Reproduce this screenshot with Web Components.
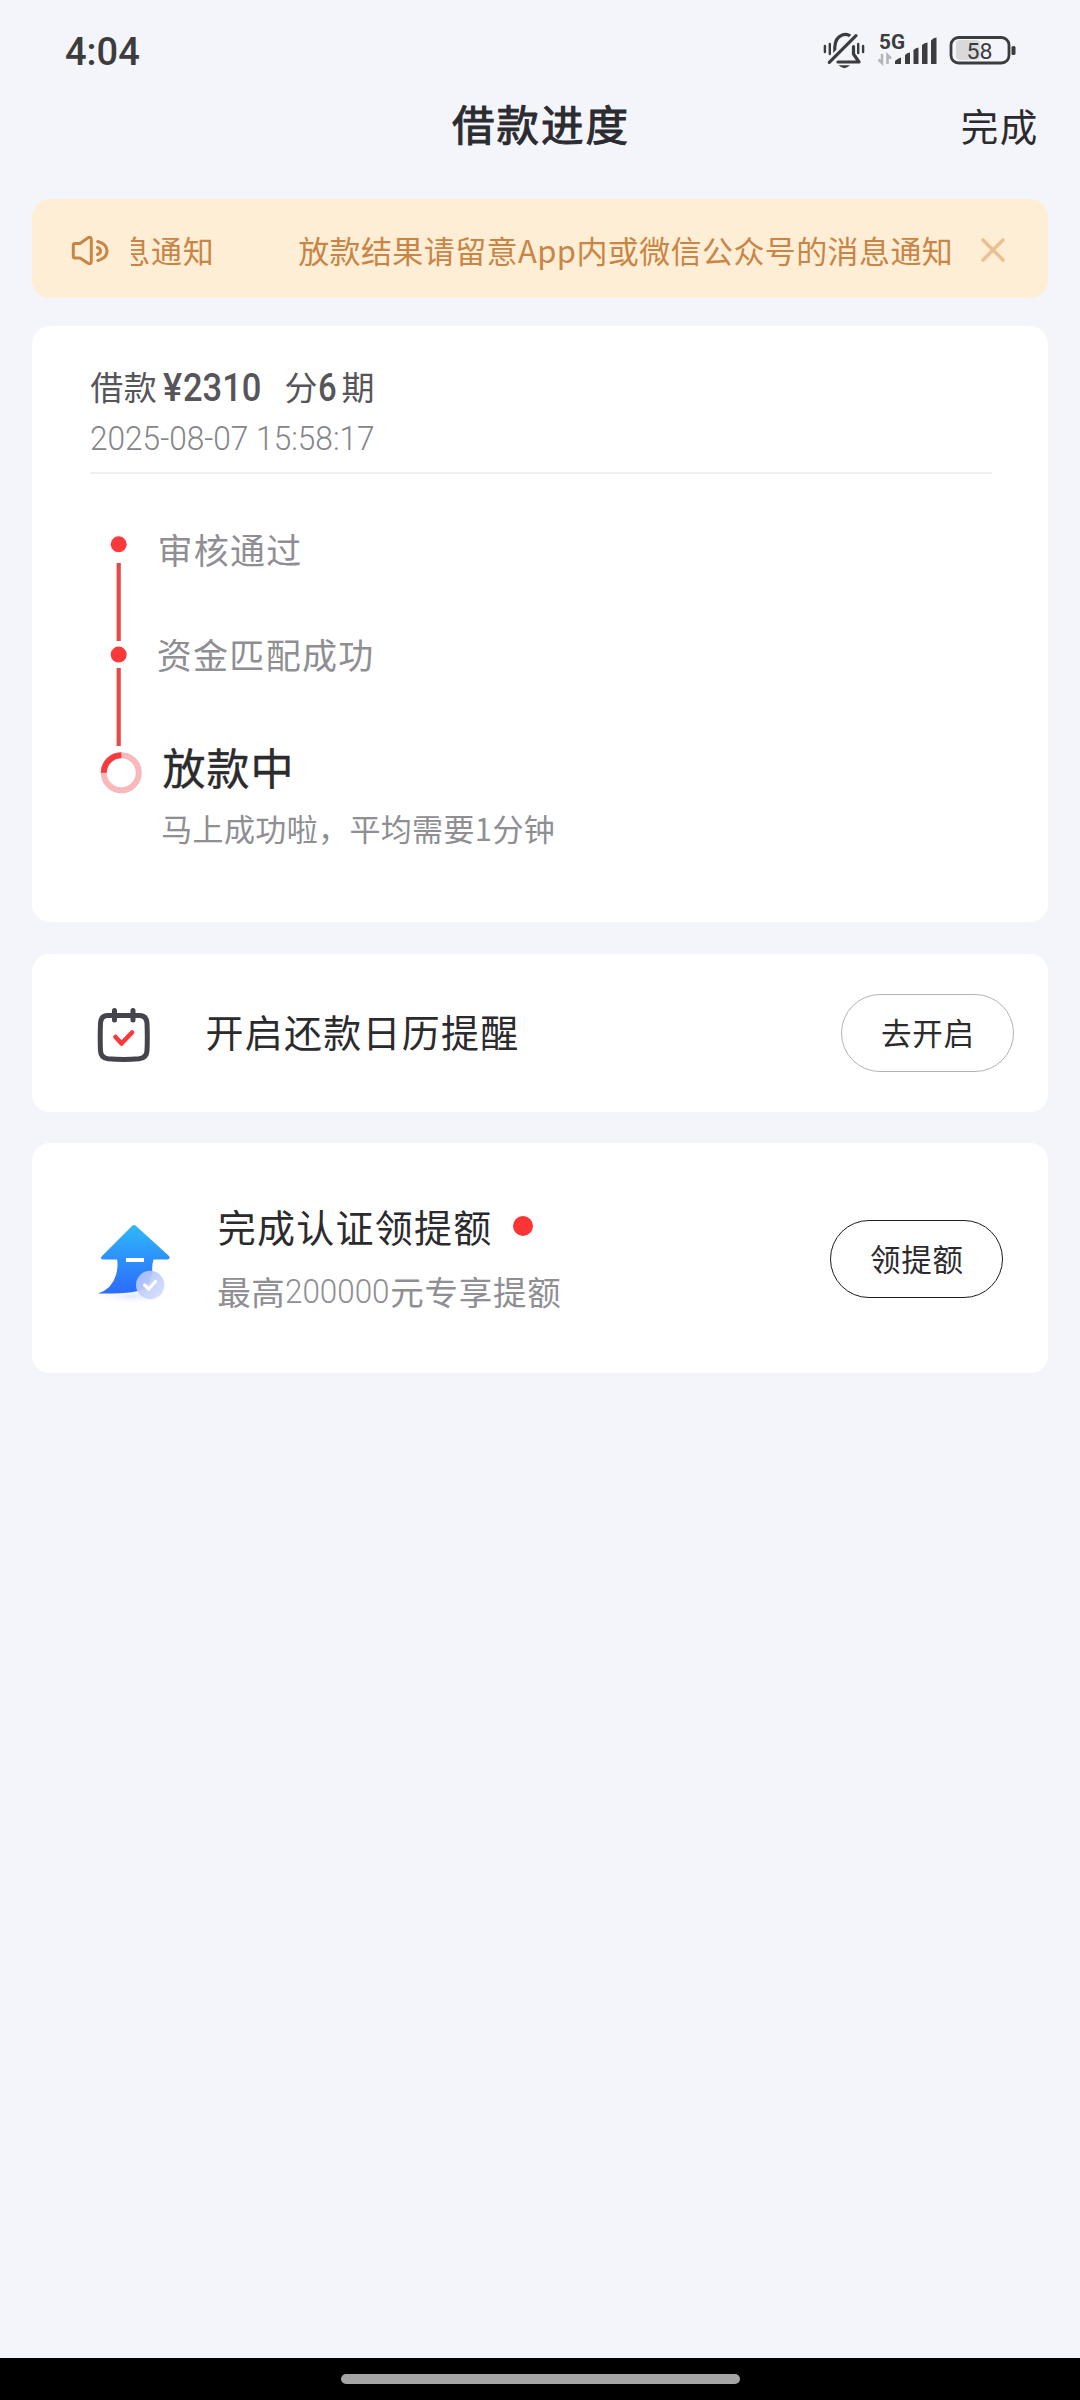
<!DOCTYPE html>
<html lang="zh-CN">
<head>
<meta charset="utf-8">
<title>借款进度</title>
<style>
html,body{margin:0;padding:0;background:#f4f5fb}
body{width:1080px;height:2400px;overflow:hidden;font-family:"Noto Sans CJK SC",sans-serif;color:#2b2b2e}
</style>
</head>
<body>
<loan-progress-page></loan-progress-page>
<script>
const define=(name,html,setup)=>customElements.define(name,class extends HTMLElement{
  constructor(){super();this.attachShadow({mode:'open'}).innerHTML=html;}
  connectedCallback(){if(setup)setup(this,this.shadowRoot);}
});

/* One line of text, spread to the width given in w: tracking for Chinese text, glyph scaling for figures. */
define('fit-text',`<style>
:host{display:block;flex:none;white-space:nowrap;line-height:1}
span{display:inline-block;transform-origin:0 50%;white-space:pre}
</style><span><slot></slot></span>`,(host,root)=>{
  const s=root.querySelector('span'),w=+host.getAttribute('w');
  if(!w)return;
  host.style.width=w+'px';
  const text=host.textContent||(host.getRootNode().host||host).textContent;
  if(/[\u4e00-\u9fff]/.test(text)){
    const track=(w-s.getBoundingClientRect().width)/[...text.trim()].length;
    s.style.letterSpacing=track+'px';
    s.style.marginLeft=track/2+'px';
    s.style.marginRight=-track/2+'px';
  }else s.style.transform=`scaleX(${w/s.offsetWidth})`;
});

define('status-bar',`<style>
:host{display:flex;height:100px;box-sizing:border-box;padding:0 64px 0 65px;justify-content:space-between;align-items:center;color:#3c3c3e}
.time{font:500 38px/1 Roboto,sans-serif;margin-top:3px}
.right{display:flex;align-items:center}
svg{display:block}
</style>
<fit-text class="time" w="75">4:04</fit-text>
<div class="right">
<svg width="194" height="40" viewBox="822 30 194 40">
  <g fill="none" stroke="#3c3c3e" stroke-width="3.2" stroke-linecap="round" stroke-linejoin="round">
    <path d="M834.8 54V47C835.500 34 847 32 851.500 37.500"/>
    <path d="M838 62H859L853.500 54V46.500"/>
    <path d="M829.500 62L856 35.500" stroke="#f4f5fb" stroke-width="7.500"/>
    <path d="M829.300 62.300L856 35.700"/>
    <path d="M824.900 46V52M829.800 44V54M858.200 44V53M863.100 46V52" stroke-width="2.400"/>
  </g>
  <path d="M838.500 65.300H850Q844.500 71 838.500 65.300Z" fill="#3c3c3e"/>
  <text x="879" y="49" font-family="Roboto,sans-serif" font-weight="700" font-size="20" textLength="26" lengthAdjust="spacingAndGlyphs" fill="#3c3c3e">5G</text>
  <path d="M882 54V63L878.500 59.500M887.500 64V55L891 58.500" fill="none" stroke="#b3b3b8" stroke-width="2.500"/>
  <g fill="#3c3c3e">
    <path d="M895 64V61Q898 58 901 57.500V64Z"/><path d="M905 64V55Q907 52.500 910 52.500V64Z"/><path d="M913.500 64V50Q916 47.500 918.500 47.500V64Z"/><path d="M922 64V45Q924.500 42.500 927.500 42.500V64Z"/><path d="M931 64V40.500Q933.500 37.500 936.500 37.500V64Z"/>
  </g>
  <rect x="956" y="40" width="24" height="20" rx="4" fill="#d9d9dc"/>
  <rect x="951" y="37.500" width="58" height="25.500" rx="7.500" fill="none" stroke="#3c3c3e" stroke-width="2.800"/>
  <rect x="1011.500" y="46" width="4" height="9" rx="1.600" fill="#3c3c3e"/>
  <text x="966.500" y="59" font-family="Roboto,sans-serif" font-size="22.500" textLength="26" lengthAdjust="spacingAndGlyphs" fill="#3c3c3e">58</text>
</svg></div>`);

define('title-bar',`<style>
:host{display:grid;grid-template-columns:1fr auto 1fr;height:99px;align-items:center;box-sizing:border-box}
.t{grid-column:2;font-size:42.500px;-webkit-text-stroke:1px #2b2b30;color:#2b2b30;margin-top:-52px}
.d{justify-self:end;font-size:37.500px;margin:-50px 42px 0 0}
</style>
<fit-text class="t" w="178">借款进度</fit-text><fit-text class="d" w="78">完成</fit-text>`);

define('notice-bar',`<style>
:host{display:flex;align-items:center;height:99px;border-radius:18px;background:#ffeed6;color:#c88546;box-sizing:border-box;padding:0 42px 0 39px}
.m{width:822px;height:60px;margin:2px 0 0 22px;overflow:hidden;display:flex;justify-content:flex-end;align-items:center;gap:84px;font-size:31px}
svg{flex:none;display:block;margin-top:4px}.x{margin:3px 0 0 27px}
</style>
<svg width="38" height="34" viewBox="71 235 38 34" fill="none" stroke="#c88546" stroke-width="3" stroke-linecap="round" stroke-linejoin="round"><path d="M75 244.500H80L88 238.800Q91.300 237 91.300 241V262Q91.300 266 88 264.200L80 259H75Q73.300 259 73.300 257.300V246.200Q73.300 244.500 75 244.500Z"/><path d="M97.800 242.500Q107 245 107 252Q107 259 98 261.500M97.500 248.500Q100.500 249.500 100.500 252Q100.500 254.500 97.500 255.500"/></svg>
<div class="m"><fit-text w="95">息通知</fit-text><fit-text w="655">放款结果请留意App内或微信公众号的消息通知</fit-text></div>
<svg class="x" width="26" height="26" viewBox="0 0 26 26"><path d="M3 3L23 23M23 3L3 23" stroke="#ebc194" stroke-width="3.600" stroke-linecap="round"/></svg>`);

define('ui-card',`<style>:host{display:block;background:#fff;border-radius:18px;box-sizing:border-box}</style><slot></slot>`);

define('loan-summary',`<style>
:host{display:block;margin:0 56px 0 58px;height:148px;border-bottom:2px solid #eeeef0;box-sizing:border-box;padding-top:45px}
.a{display:flex;align-items:center;height:34px;color:#55555a;font-size:33px}
.k{margin-top:-4px}
.n{font-family:"Roboto",sans-serif;font-weight:500;font-size:38px}
.b{font:300 32.500px/1 Roboto,sans-serif;color:#858589;margin-top:18px}
</style>
<div class="a"><fit-text class="k" w="67">借款</fit-text><fit-text class="n" style="margin-left:6px" w="19">¥</fit-text><fit-text class="n" style="margin-left:1px" w="78">2310</fit-text><fit-text class="k" style="margin-left:23px" w="34">分</fit-text><fit-text class="n" style="margin-left:0" w="19">6</fit-text><fit-text class="k" style="margin-left:4px" w="34">期</fit-text></div>
<fit-text class="b" w="285">2025-08-07 15:58:17</fit-text>`);

define('progress-steps',`<style>
:host{display:flex;padding:0 64px 0 66px;height:340px;margin-top:59px}
.r{width:46px;flex:none}.l{color:#8e8e93;font-size:35px}
.c{display:flex;flex-direction:column;align-items:flex-start}
</style>
<svg class="r" width="46" height="270" viewBox="98 533 46 270"><g fill="#fb393a"><circle cx="118.700" cy="544.300" r="8"/><circle cx="118.700" cy="654.600" r="8"/></g><path d="M118.700 563V641M118.700 668V746" stroke="#e24a4c" stroke-width="4.200"/><circle cx="121.300" cy="772.700" r="17.500" fill="none" stroke="#f9b8b9" stroke-width="6"/><path d="M103.800 772.700A17.500 17.500 0 0 1 121.300 755.200" fill="none" stroke="#f43b3d" stroke-width="6"/></svg>
<div class="c">
<fit-text class="l" style="margin:-2px 0 0 13px" w="145">审核通过</fit-text>
<fit-text class="l" style="margin:70px 0 0 12px" w="218">资金匹配成功</fit-text>
<fit-text style="font-size:43px;margin:74px 0 0 18px;-webkit-text-stroke:.4px" w="132">放款中</fit-text>
<fit-text style="font-size:31px;margin:24px 0 0 17px;color:#8e8e93" w="394">马上成功啦，平均需要1分钟</fit-text>
</div>`);

define('pill-button',`<style>
:host{display:flex;flex:none;width:173px;height:78px;box-sizing:border-box;border:1.500px solid var(--line,#1c1c1e);border-radius:39px;align-items:center;justify-content:center;font-size:30.500px}
fit-text{margin-top:-2px}
</style><fit-text w="94"><slot></slot></fit-text>`);

define('reminder-row',`<style>
:host{display:flex;height:158px;align-items:center;padding:0 34px 0 65px}
svg{flex:none;margin-top:4px}.t{font-size:38px;margin:-4px auto 0 54px}
</style>
<svg width="54" height="58" viewBox="97 1005 54 58" fill="none" stroke-linecap="round" stroke-linejoin="round"><path d="M108 1014.500H139Q146.500 1014.500 147 1022Q147.600 1036 147 1050Q146.500 1057 139 1057.800Q124 1059 108 1057.800Q101 1057 100.500 1050Q99.900 1036 100.500 1022Q101 1014.500 108 1014.500Z" stroke="#45444d" stroke-width="5"/><path d="M114.500 1009.500V1019M133 1009.500V1019" stroke="#45444d" stroke-width="5"/><path d="M115.500 1036L121.500 1042.500L132 1031.500" stroke="#fb393a" stroke-width="4.600"/></svg>
<fit-text class="t" w="314">开启还款日历提醒</fit-text>
<pill-button style="--line:#b3b3b5">去开启</pill-button>`);

define('quota-row',`<style>
:host{display:flex;height:230px;align-items:center;padding:0 45px 0 58px}
svg{flex:none;margin-top:3px}.c{display:flex;flex-direction:column;margin:-1px auto 0 37px;gap:28px}
.h,.s{display:flex;align-items:center}.h{font-size:38px;gap:21px}.dot{width:20px;height:20px;border-radius:50%;background:#fb3434;margin-top:1px}
.s{color:#8e8e93;font-size:33.500px}.n{font-family:Roboto,sans-serif;font-weight:300;margin-top:2px}
pill-button{margin-top:2px}
</style>
<svg width="90" height="90" viewBox="90 1215 90 90">
<defs><linearGradient id="g" x1="0" y1="0" x2="0" y2="1"><stop stop-color="#30b9f8"/><stop offset=".5" stop-color="#2d90fb"/><stop offset="1" stop-color="#2b6bfb"/></linearGradient><linearGradient id="k" x1="0" y1="0" x2="1" y2="1"><stop stop-color="#a9bcfb"/><stop offset="1" stop-color="#d9e2ff"/></linearGradient><radialGradient id="s"><stop stop-color="#dfe6ff"/><stop offset="1" stop-color="#fff" stop-opacity="0"/></radialGradient></defs>
<ellipse cx="132" cy="1296" rx="40" ry="9" fill="url(#s)"/>
<path d="M132.500 1225.600Q134 1224.200 135.500 1225.600L169 1256Q171 1259 167.500 1259.400H153.500Q151.500 1266 152.500 1274L146 1288Q138 1294 98 1293.500Q112 1289 116 1275Q118.500 1266 117 1259.400H103Q99.500 1259 102 1256Z" fill="url(#g)"/>
<rect x="126" y="1258" width="18" height="4" fill="#fff"/><circle cx="150.200" cy="1285" r="14.200" fill="url(#k)" opacity=".93"/><path d="M144.500 1285L148.800 1289L155.500 1281.500" fill="none" stroke="#fff" stroke-width="3.200" stroke-linecap="round"/></svg>
<div class="c"><div class="h"><fit-text w="275">完成认证领提额</fit-text><span class="dot"></span></div>
<div class="s"><fit-text w="68">最高</fit-text><fit-text class="n" w="105">200000</fit-text><fit-text w="171">元专享提额</fit-text></div></div>
<pill-button>领提额</pill-button>`);

define('home-indicator',`<style>
:host{display:flex;height:42px;background:#000;align-items:center;justify-content:center}
i{width:399px;height:10px;border-radius:5px;background:#a5a5a5}
</style><i></i>`);

define('loan-progress-page',`<style>
:host{display:flex;flex-direction:column;width:1080px;height:2400px;background:#f4f5fb}
main{display:flex;flex-direction:column;margin:0 32px;flex:1}
</style>
<status-bar></status-bar><title-bar></title-bar>
<main><notice-bar></notice-bar>
<ui-card style="margin-top:28px;height:596px;overflow:hidden"><loan-summary></loan-summary><progress-steps></progress-steps></ui-card>
<ui-card style="margin-top:32px;height:158px"><reminder-row></reminder-row></ui-card>
<ui-card style="margin-top:31px;height:230px"><quota-row></quota-row></ui-card></main>
<home-indicator></home-indicator>`);
</script>
</body>
</html>
